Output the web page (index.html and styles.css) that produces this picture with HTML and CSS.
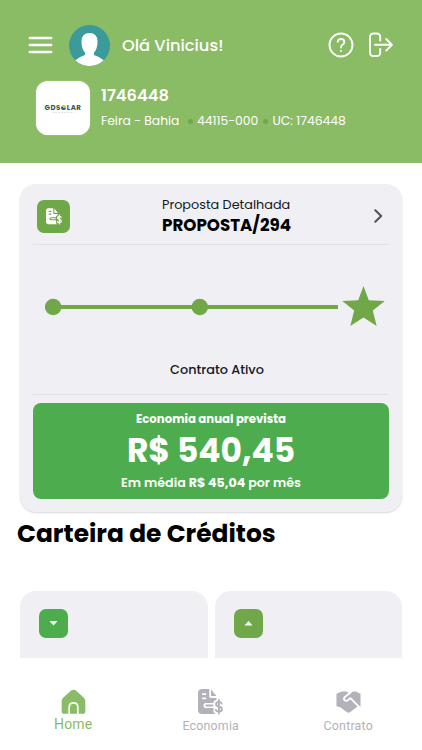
FILE: index.html
```
<!DOCTYPE html>
<html lang="pt-BR">
<head>
<meta charset="utf-8">
<meta name="viewport" content="width=device-width, initial-scale=1">
<title>Home</title>
<link rel="stylesheet" href="styles.css">
</head>
<body>
<svg class="defs" width="0" height="0" aria-hidden="true">
  <symbol id="bill" viewBox="0 0 25 26">
    <path fill="currentColor" fill-rule="evenodd" d="M4 0H11.300V7.500Q11.300 9 12.800 9H18.500V10.500L15.500 12.500V14H8Q5.500 14 5.500 16.500Q5.500 19 8 19H15.500V22.500L17 25H4Q0 25 0 21V4Q0 0 4 0ZM4.200 4.200V5.900H8.200V4.200ZM4.200 8.500V10.200H8.200V8.500Z"/>
    <path fill="currentColor" d="M13 .5L18.600 7H13ZM8.200 15.600H15.200V17.400H8.200Q7.300 17.400 7.300 16.500Q7.300 15.600 8.200 15.600Z"/>
    <path fill="none" stroke="currentColor" stroke-width="1.900" stroke-linecap="round" d="M23.600 14.400Q22.800 12.900 20.800 12.900Q18.100 12.900 18.100 15.200Q18.100 17 20.800 17.500Q23.900 18 23.900 20.300Q23.900 22.600 20.900 22.600Q18.300 22.600 17.700 20.900M20.900 11V24.600"/>
  </symbol>
</svg>
<div class="screen">
  <header class="top">
    <div class="greeting">
      <svg class="menu" viewBox="0 0 24 18"><path d="M1.400 2H22.600M1.400 9H22.600M1.400 16H22.600"/></svg>
      <svg class="avatar" viewBox="0 0 41 41"><circle cx="20.500" cy="20.500" r="20.500" fill="#3b9b9b"/><path fill="#fff" d="M20.500 8Q28.500 8 28.500 16.500Q28.500 24 25 27.500V30Q30 31.500 34.700 35.300A20.500 20.500 0 0 1 6.300 35.300Q11 31.500 16 30V27.500Q12.500 24 12.500 16.500Q12.500 8 20.500 8Z"/></svg>
      <span class="hello">Olá Vinicius!</span>
      <svg class="help" viewBox="0 0 26 26"><circle cx="13" cy="13" r="11.500"/><path d="M9.700 9.800Q9.900 7 13 7Q16.300 7 16.300 9.900Q16.300 11.500 14.700 12.500Q13 13.500 13 15.500M13 18.900V19"/></svg>
      <svg class="exit" viewBox="0 0 26 26"><path d="M12.200 8.600V5Q12.200 1.500 8.700 1.500H5.500Q2 1.500 2 5V20.500Q2 24 5.500 24H8.700Q12.200 24 12.200 20.500V16.900M7 12.800H23.500M18.200 7L24 12.800L18.200 18.600"/></svg>
    </div>
    <div class="unit">
      <div class="logo"><div class="wordmark">GDS<i></i>LAR</div><div class="tagline"></div></div>
      <div class="info">
        <div class="number">1746448</div>
        <div class="meta"><span class="city">Feira - Bahia</span><b></b><span class="zip">44115-000</span><b></b><span class="uc">UC: 1746448</span></div>
      </div>
    </div>
  </header>
  <main>
    <section class="card">
      <div class="proposal">
        <span class="tile"><svg><use href="#bill"/></svg></span>
        <div class="names"><div class="kind">Proposta Detalhada</div><div class="code">PROPOSTA/294</div></div>
        <svg class="chevron" viewBox="0 0 9 14"><path d="M1.300 1.200L7.200 7L1.300 12.800"/></svg>
      </div>
      <div class="status">
        <svg class="timeline" viewBox="0 0 356 44"><path d="M20 22H305" stroke="#70a748" stroke-width="4"/><g fill="#70a748"><circle cx="20.200" cy="22" r="8.300"/><circle cx="166.800" cy="22" r="8.300"/><path d="M330.500 1L335.800 15.200L351.700 16L339.800 25.500L343.700 41L330.500 32.500L317.300 41L321.200 25.500L309.300 16L325.200 15.200Z"/></g></svg>
        <div class="state"><span>Contrato Ativo</span></div>
      </div>
      <div class="saving">
        <div class="s1">Economia anual prevista</div>
        <div class="s2">R$ 540,45</div>
        <div class="s3">Em média <strong>R$ 45,04</strong> por mês</div>
      </div>
    </section>
    <h1>Carteira de Créditos</h1>
    <section class="credits">
      <div class="credit"><span class="mini down"><svg viewBox="0 0 8 5"><path d="M0 0H8L4 4.500Z"/></svg></span></div>
      <div class="credit"><span class="mini up"><svg viewBox="0 0 8 5"><path d="M0 4.500H8L4 0Z"/></svg></span></div>
    </section>
  </main>
  <nav>
    <a class="home"><svg viewBox="0 0 26 26"><path fill="currentColor" d="M10.500 1.100Q13 -.8 15.500 1.100L23.500 8.200Q25.300 9.800 25.300 12V22.500Q25.300 25.300 22.500 25.300H3.500Q.7 25.300 .7 22.500V12Q.7 9.800 2.500 8.200Z"/><path fill="none" stroke="#fff" stroke-width="1.800" d="M8.500 25.500V18.500Q8.500 14 13 14Q17.500 14 17.500 18.500V25.500"/></svg><span>Home</span></a>
    <a class="economy"><svg><use href="#bill"/></svg><span>Economia</span></a>
    <a class="contract"><svg viewBox="0 0 26 26"><path fill="currentColor" d="M.5 4.500L6 2.200H11L13 3.500L17 2.200H20.500L25.500 4.500V17.800H22.500L14.800 23.500Q13 24.600 11.200 23.500L4.500 18.500L.5 17.500Z"/><path fill="none" stroke="#fff" stroke-width="1.900" stroke-linecap="round" stroke-linejoin="round" d="M16.500 1.800L9 8Q7.500 9.800 9 11.200Q10.500 12.500 12.500 11L15 9L24.500 18.500"/></svg><span>Contrato</span></a>
  </nav>
</div>
</body>
</html>
```

FILE: styles.css
```
* { box-sizing: border-box; }
body { margin: 0; background: #fff; font-family: Poppins, Inter, sans-serif; color: #000; }
svg { display: block; flex: none; }
.defs { position: absolute; }
.screen { width: 422px; height: 750px; overflow: hidden; display: flex; flex-direction: column; white-space: nowrap; }
.top { height: 163px; flex: none; background: #8abb65; color: #fff; padding: 24.500px 28px 0; }
.greeting { display: flex; align-items: center; height: 41px; }
.menu { width: 25px; height: 18px; }
.menu path { stroke: #fff; stroke-width: 2.600; stroke-linecap: round; }
.avatar { width: 41px; height: 41px; margin: 0 12px 0 16px; }
.hello { flex: 1; font-size: 16.300px; font-weight: 500; }
.help, .exit { width: 26px; height: 26px; fill: none; stroke: #fff; stroke-width: 1.900; stroke-linecap: round; stroke-linejoin: round; }
.help { margin-right: 14px; }
.unit { display: flex; margin: 15.500px 0 0 8px; }
.logo { width: 54px; height: 54px; border-radius: 12px; background: #fff; display: flex; flex-direction: column; align-items: center; justify-content: center; gap: 1px; box-shadow: 0 0 1px #eef5e8; }
.wordmark { display: flex; align-items: center; font-size: 7px; line-height: 7px; font-weight: 700; color: #365747; letter-spacing: .5px; }
.wordmark i { width: 5px; height: 5px; border-radius: 50%; background: conic-gradient(#e0bd37 30%, #215c9c 0 80%, #e0bd37 0); margin-right: 1px; }
.tagline { width: 22px; height: 1px; background: repeating-linear-gradient(90deg, #dfe3df 0 2px, #fff 2px 3px); }
.info { margin-left: 11px; }
.number { font-size: 16.300px; font-weight: 600; line-height: 22px; margin-top: 4px; }
.meta { display: flex; align-items: center; height: 20px; margin-top: 4px; font-size: 12.350px; }
.city { width: 87px; }
.meta b { width: 5px; height: 5px; border-radius: 50%; background: #70a748; }
.zip { margin-left: 4px; width: 65.500px; }
.uc { margin-left: 5px; }
main { height: 495px; flex: none; overflow: hidden; padding: 21px 20px 0; }
.card { height: 327.500px; padding: 0 13px; border-radius: 16px; background: #f0eff4; box-shadow: 0 1px 2px #d9d8df; }
.proposal { height: 61px; padding: 4px 6px 0 4px; display: flex; align-items: center; justify-content: space-between; border-bottom: 1.500px solid #e2e1e6; }
.tile { width: 33px; height: 33px; border-radius: 7px; background: #70a748; color: #fff; display: grid; place-items: center; }
.tile svg { width: 16px; height: 17px; }
.names { width: 129px; margin-left: 9px; }
.kind { font-size: 12.800px; line-height: 19px; margin-top: -1px; color: #17171d; }
.code { font-size: 16.700px; line-height: 22px; font-weight: 700; }
.chevron { width: 9px; height: 14px; fill: none; stroke: #50505e; stroke-width: 2; stroke-linecap: round; stroke-linejoin: round; }
.status { height: 150px; padding-top: 40px; border-bottom: 1.500px solid #e2e1e6; }
.timeline { width: 356px; height: 44px; }
.state { margin-top: 31px; height: 20px; line-height: 20px; font-size: 12.850px; font-weight: 500; text-align: center; padding-left: 12px; color: #17171d; }
.saving { height: 96px; margin-top: 8px; border-radius: 8px; background: #4dad4e; color: #fff; text-align: center; padding-top: 7px; }
.s1 { font-size: 11.700px; font-weight: 700; line-height: 19px; }
.s2 { font-size: 32.900px; font-weight: 700; line-height: 43px; }
.s3 { font-size: 12.650px; font-weight: 600; line-height: 21px; }
.s3 strong { font-weight: 700; }
h1 { margin: 2.500px 0 0 -3px; font-size: 24.900px; line-height: 40px; font-weight: 700; }
.credits { display: grid; grid-template-columns: 1fr 1fr; gap: 7px; margin-top: 37px; }
.credit { height: 100px; border-radius: 16px; background: #f0eff4; padding: 18px 19px; }
.mini { width: 29px; height: 29px; border-radius: 7px; display: grid; place-items: center; }
.mini svg { width: 9px; height: 5px; fill: #fff; }
.down { background: #4dad4e; }
.up { background: #70a748; }
nav { height: 92px; display: grid; grid-template-columns: repeat(3, 137.500px); padding: 31px 0 0 4.500px; font-family: Roboto, sans-serif; color: #b2b2ba; }
nav a { display: flex; flex-direction: column; align-items: center; }
nav svg { width: 25px; height: 26px; }
nav span { font-size: 12.400px; line-height: 16px; margin-top: 3px; letter-spacing: .2px; }
.home { color: #8abb65; }
.home span { font-size: 14px; margin-top: 1px; }
```
